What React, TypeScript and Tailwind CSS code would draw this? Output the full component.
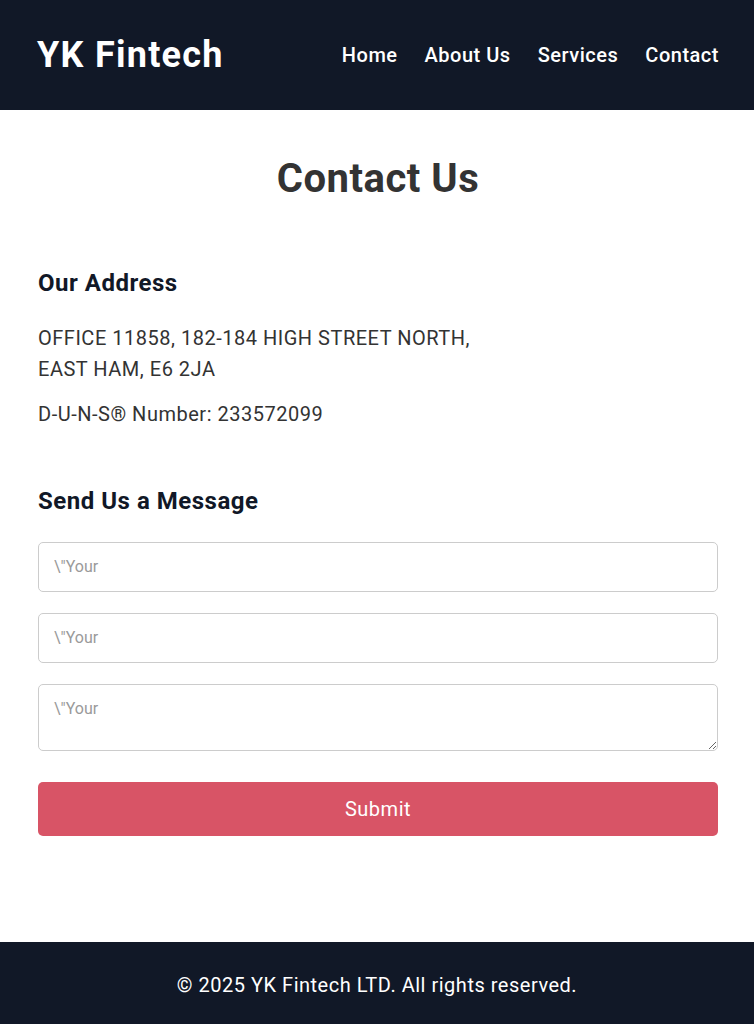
import React from "react";

export default function App() {
  return (
    <div className="min-h-screen bg-white flex flex-col tracking-[0.032em]" style={{ fontFamily: "Roboto, 'Liberation Sans', sans-serif" }}>
      <header className="h-[110px] bg-[#111827] text-white flex items-center justify-between pl-[37px] pr-[35px] shrink-0">
        <div className="text-[36px] font-bold leading-none tracking-[0.035em]">YK Fintech</div>
        <nav className="flex items-center gap-[27px] text-[20px] font-medium">
          <a>Home</a>
          <a>About Us</a>
          <a>Services</a>
          <a>Contact</a>
        </nav>
      </header>

      <main className="flex-1 pl-[38px] pr-[36px] pb-[106px]">
        <h1 className="mt-[45px] text-center text-[40px] font-bold leading-[1.2] text-[#333333]">Contact Us</h1>

        <h2 className="mt-[66px] text-[24px] font-bold leading-[1.2] text-[#111827]">Our Address</h2>
        <p className="mt-[25px] text-[20px] leading-[31px] text-[#333333]">
          OFFICE 11858, 182-184 HIGH STREET NORTH,
          <br />
          EAST HAM, E6 2JA
        </p>
        <p className="mt-[14px] text-[20px] leading-[31px] text-[#333333]">D-U-N-S® Number: 233572099</p>

        <h2 className="mt-[57px] text-[24px] font-bold leading-[1.2] text-[#111827]">Send Us a Message</h2>

        <form className="mt-[26px] flex flex-col" onSubmit={(e) => e.preventDefault()}>
          <input
            type="text"
            placeholder={'\\"Your'}
            className="h-[50px] w-full border border-[#cccccc] rounded-[5px] px-[15px] text-[16px] tracking-normal placeholder:text-[#9a9a9a] outline-none"
          />
          <input
            type="email"
            placeholder={'\\"Your'}
            className="mt-[21px] h-[50px] w-full border border-[#cccccc] rounded-[5px] px-[15px] text-[16px] tracking-normal placeholder:text-[#9a9a9a] outline-none"
          />
          <textarea
            placeholder={'\\"Your'}
            className="mt-[21px] h-[67px] w-full border border-[#cccccc] rounded-[5px] px-[15px] py-[14px] text-[16px] tracking-normal leading-[1.2] placeholder:text-[#9a9a9a] outline-none block"
          />
          <button
            type="submit"
            className="mt-[31px] h-[54px] w-full rounded-[5px] bg-[#d85466] text-white text-[20px]"
          >
            Submit
          </button>
        </form>
      </main>

      <footer className="h-[82px] bg-[#111827] text-white flex items-center justify-center text-[20px] pt-[4px] shrink-0">
        © 2025 YK Fintech LTD. All rights reserved.
      </footer>
    </div>
  );
}
